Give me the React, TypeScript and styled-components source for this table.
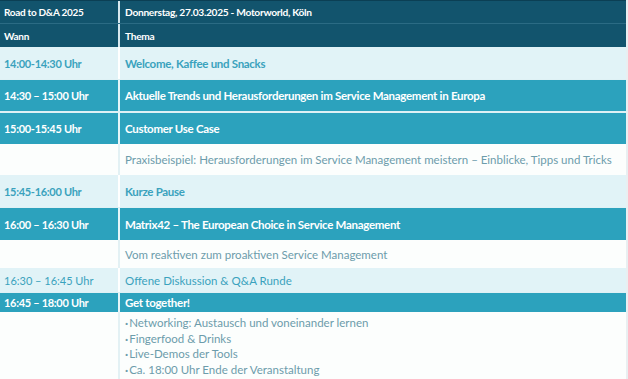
import styled, { createGlobalStyle } from 'styled-components';

const GlobalStyle = createGlobalStyle`
  html, body {
    margin: 0;
    padding: 0;
    background: #e9eff1;
  }
  body {
    font-family: 'Lato', 'Liberation Sans', sans-serif;
  }
`;

type Tone = 'head' | 'teal' | 'light' | 'white';

const palette: Record<Tone, { bg: string; fg: string; rule: string; line: string }> = {
  head: { bg: '#12546d', fg: '#ffffff', rule: '#d8e8ee', line: '#2b6b84' },
  teal: { bg: '#2ca2bd', fg: '#ffffff', rule: '#e6f5f8', line: '#dff1f5' },
  light: { bg: '#e1f3f7', fg: '#3aa2bd', rule: '#ffffff', line: '#d3ecf2' },
  white: { bg: '#fcfefd', fg: '#6c9cab', rule: '#e3f1f4', line: '#e3f1f4' },
};

const Schedule = styled.div`
  width: 626px;
  border-top: 1px solid #0b3f54;
`;

const Row = styled.div<{ $tone: Tone; $h: number; $gap?: number }>`
  display: grid;
  grid-template-columns: 120px 1fr;
  height: ${(p) => p.$h}px;
  box-sizing: border-box;
  background: ${(p) => palette[p.$tone].bg};
  color: ${(p) => palette[p.$tone].fg};
  border-top: ${(p) => p.$gap ?? 0}px solid ${(p) => palette[p.$tone].line};
`;

const Cell = styled.div<{ $tone: Tone; $bold?: boolean; $small?: boolean; $top?: boolean }>`
  display: flex;
  align-items: ${(p) => (p.$top ? 'flex-start' : 'center')};
  padding: 0 4px;
  font-size: ${(p) => (p.$small ? '10px' : '11px')};
  font-weight: ${(p) => (p.$bold ? 700 : 400)};
  letter-spacing: ${(p) => (p.$bold ? '-0.3px' : '0')};
  white-space: nowrap;
  overflow: hidden;
`;

const TimeCell = styled(Cell)`
  border-right: 2px solid ${(p) => palette[p.$tone].rule};
`;

const TopicCell = styled(Cell)`
  padding-left: 5px;
  font-size: ${(p) => (p.$small ? '10.2px' : '11.5px')};
`;

const Bullets = styled.ul`
  list-style: none;
  margin: 0;
  padding: 3px 0 0;
  line-height: 15.5px;
`;

const Bullet = styled.li`
  &::before {
    content: '·';
    font-weight: 700;
    margin-right: 1px;
  }
`;

type Item = {
  tone: Tone;
  h: number;
  gap?: number;
  time: string;
  topic: string;
  bold: boolean;
};

const items: Item[] = [
  { tone: 'light', h: 32, time: '14:00-14:30 Uhr', topic: 'Welcome, Kaffee und Snacks', bold: true },
  { tone: 'teal', h: 32, gap: 1, time: '14:30 – 15:00 Uhr', topic: 'Aktuelle Trends und Herausforderungen im Service Management in Europa', bold: true },
  { tone: 'teal', h: 33, gap: 2, time: '15:00-15:45  Uhr', topic: 'Customer Use Case', bold: true },
  { tone: 'white', h: 31, time: '', topic: 'Praxisbeispiel: Herausforderungen im Service Management meistern – Einblicke, Tipps und Tricks', bold: false },
  { tone: 'light', h: 32, time: '15:45-16:00 Uhr', topic: 'Kurze Pause', bold: true },
  { tone: 'teal', h: 33, gap: 1, time: '16:00 – 16:30 Uhr', topic: 'Matrix42 – The European Choice in Service Management', bold: true },
  { tone: 'white', h: 28, time: '', topic: 'Vom reaktiven zum proaktiven Service Management', bold: false },
  { tone: 'light', h: 24, time: '16:30 – 16:45 Uhr', topic: 'Offene Diskussion & Q&A Runde', bold: false },
  { tone: 'teal', h: 20, gap: 1, time: '16:45 – 18:00 Uhr', topic: 'Get together!', bold: true },
];

const closing = [
  'Networking: Austausch und voneinander lernen',
  'Fingerfood & Drinks',
  'Live-Demos der Tools',
  'Ca. 18:00 Uhr Ende der Veranstaltung',
];

export default function App() {
  return (
    <>
      <GlobalStyle />
      <Schedule>
        <Row $tone="head" $h={22}>
          <TimeCell $tone="head" $bold $small>Road to D&amp;A 2025</TimeCell>
          <TopicCell $tone="head" $bold $small>Donnerstag, 27.03.2025 - Motorworld, Köln</TopicCell>
        </Row>
        <Row $tone="head" $h={24} $gap={1}>
          <TimeCell $tone="head" $bold $small>Wann</TimeCell>
          <TopicCell $tone="head" $bold $small>Thema</TopicCell>
        </Row>
        {items.map((it) => (
          <Row key={it.topic} $tone={it.tone} $h={it.h} $gap={it.gap}>
            <TimeCell $tone={it.tone} $bold={it.bold}>{it.time}</TimeCell>
            <TopicCell $tone={it.tone} $bold={it.bold}>{it.topic}</TopicCell>
          </Row>
        ))}
        <Row $tone="white" $h={67}>
          <TimeCell $tone="white" />
          <TopicCell $tone="white" $top>
            <Bullets>
              {closing.map((c) => (
                <Bullet key={c}>{c}</Bullet>
              ))}
            </Bullets>
          </TopicCell>
        </Row>
      </Schedule>
    </>
  );
}
